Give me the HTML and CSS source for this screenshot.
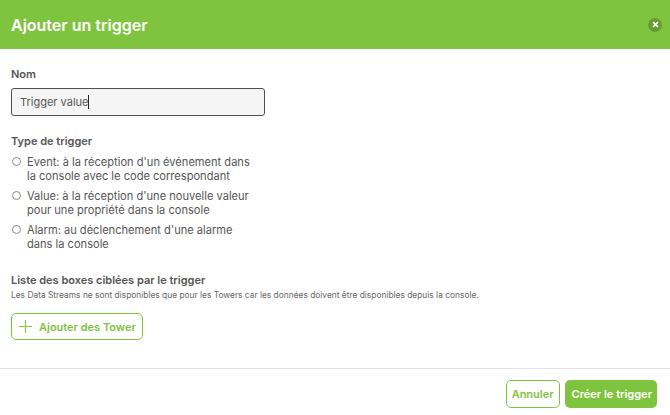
FILE: index.html
```html
<!DOCTYPE html>
<html lang="fr">
<head>
    <meta charset="UTF-8">
    <title>Ajouter un trigger</title>
    <link rel="stylesheet" href="styles.css">
</head>
<body>
    <div class="modal">
        <div class="modal-header">
            <h1>Ajouter un trigger</h1>
            <button class="close" type="button" aria-label="Fermer">
                <svg width="7" height="7" viewBox="0 0 7 7"><path d="M1 1l5 5M6 1l-5 5" stroke="#fff" stroke-width="1.6" fill="none"/></svg>
            </button>
        </div>

        <div class="modal-body">
            <label class="field-title" for="name">Nom</label>
            <div class="name-input" id="name"><span>Trigger value</span><i class="caret"></i></div>

            <div class="field-title type-title">Type de trigger</div>
            <label class="radio"><span class="dot"></span><span>Event: à la réception d'un événement dans<br>la console avec le code correspondant</span></label>
            <label class="radio"><span class="dot"></span><span>Value: à la réception d'une nouvelle valeur<br>pour une propriété dans la console</span></label>
            <label class="radio"><span class="dot"></span><span>Alarm: au déclenchement d'une alarme<br>dans la console</span></label>

            <div class="field-title list-title">Liste des boxes ciblées par le trigger</div>
            <p class="hint">Les Data Streams ne sont disponibles que pour les Towers car les données doivent être disponibles depuis la console.</p>
            <button class="btn btn-outline add" type="button">
                <svg class="add-icon" width="13" height="13" viewBox="0 0 13 13"><path d="M6.5 0v13M0 6.5h13" stroke="#7fc43f" stroke-width="1.1" fill="none"/></svg>
                <span>Ajouter des Tower</span>
            </button>
        </div>

        <div class="modal-footer">
            <button class="btn btn-outline" type="button">Annuler</button>
            <button class="btn btn-primary" type="button">Créer le trigger</button>
        </div>
    </div>
</body>
</html>
```

FILE: styles.css
```css
body {
    margin: 0;
    background-color: #fff;
    font-family: Inter, "Liberation Sans", sans-serif;
    color: #555;
}

.modal {
    width: 670px;
    height: 415px;
    display: flex;
    flex-direction: column;
    overflow: hidden;
}

.modal-header {
    height: 49px;
    flex: none;
    display: flex;
    align-items: center;
    justify-content: space-between;
    padding: 0 8px 0 11px;
    background-color: #7fc43f;
}

.modal-header h1 {
    margin: 0;
    font-size: 16px;
    font-weight: 600;
    color: #fff;
}

.close {
    width: 14px;
    height: 14px;
    padding: 0;
    border: none;
    border-radius: 50%;
    background-color: #669d33;
    display: flex;
    align-items: center;
    justify-content: center;
}

.modal-body {
    flex: 1;
    padding: 18px 11px 0;
}

.field-title {
    display: block;
    font-size: 11px;
    font-weight: 600;
    line-height: 14px;
}

.name-input {
    width: 254px;
    height: 28px;
    margin-top: 7px;
    padding-left: 8px;
    display: flex;
    align-items: center;
    box-sizing: border-box;
    border: 1px solid #4f4f4f;
    border-radius: 3px;
    background-color: #f5f5f5;
    font-size: 11px;
}

.caret {
    width: 1px;
    height: 14px;
    background-color: #222;
}

.type-title {
    margin-top: 18px;
    margin-bottom: 7px;
}

.radio {
    display: flex;
    gap: 7px;
    font-size: 11.1px;
    line-height: 14px;
    margin-bottom: 6px;
}

.dot {
    width: 7px;
    height: 7px;
    margin: 2px 0 0 1px;
    flex: none;
    border: 1px solid #8a8a8a;
    border-radius: 50%;
}

.radio span:last-child {
    margin-left: -1px;
}

.list-title {
    margin-top: 22px;
}

.hint {
    margin: 3px 0 0;
    font-size: 8.4px;
    line-height: 11px;
    color: #666;
}

.btn {
    height: 28px;
    padding: 0 5px;
    border-radius: 5px;
    font-family: inherit;
    font-size: 11px;
    font-weight: 600;
    box-sizing: border-box;
}

.btn-outline {
    border: 1px solid #7fc43f;
    background-color: #fff;
    color: #7fc43f;
}

.btn-primary {
    border: none;
    padding: 0 5px 0 7px;
    background-color: #7fc43f;
    color: #fff;
}

.add {
    margin-top: 12px;
    width: 132px;
    height: 27px;
    display: flex;
    align-items: center;
    gap: 7px;
    padding: 0 0 0 7px;
    white-space: nowrap;
}

.add-icon {
    flex: none;
}

.modal-footer {
    height: 47px;
    flex: none;
    display: flex;
    justify-content: flex-end;
    align-items: flex-start;
    gap: 5px;
    padding: 11px 13px 0 0;
    border-top: 1px solid #e0e0e0;
    box-sizing: border-box;
}
```
